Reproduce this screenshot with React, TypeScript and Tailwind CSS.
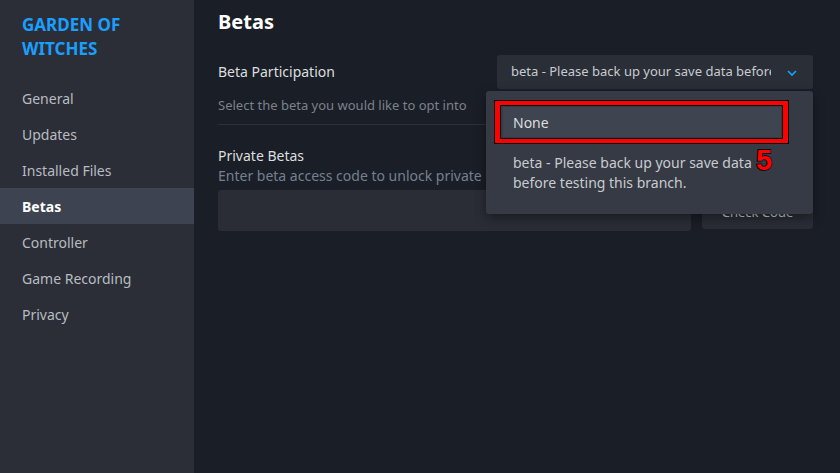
import React from "react";

const font = { fontFamily: '"Noto Sans", "Open Sans", Arial, sans-serif' };

const nav = ["General", "Updates", "Installed Files", "Betas", "Controller", "Game Recording", "Privacy"];

export default function App() {
  return (
    <div className="flex h-[473px] w-[840px] overflow-hidden bg-[#1a1e26]" style={font}>
      <aside className="flex w-[194px] shrink-0 flex-col bg-[#2b2e36]">
        <div className="px-[22px] pt-[13px] text-[17px] font-bold leading-[24px] text-[#1a9fff]">
          GARDEN OF
          <br />
          WITCHES
        </div>
        <nav className="mt-[19px] flex flex-col">
          {nav.map((n) => (
            <div
              key={n}
              className={
                n === "Betas"
                  ? "flex h-[36px] items-center bg-[#3d4350] px-[22px] text-[14px] font-bold text-white"
                  : "flex h-[36px] items-center px-[22px] text-[14px] text-[#b8bcc2]"
              }
            >
              {n}
            </div>
          ))}
        </nav>
      </aside>
      <main className="relative flex flex-1 flex-col px-[24px] pr-[27px]">
        <h1 className="pt-[7px] text-[20px] font-bold leading-[30px] text-white">Betas</h1>
        <div className="mt-[18px] flex items-center justify-between">
          <div className="-mt-[2px] text-[14px] text-[#dcdedf]">Beta Participation</div>
          <div className="flex h-[34px] w-[316px] items-center justify-between rounded-[3px] bg-[#2a2e37] pl-[14px] pr-[15px]">
            <span className="w-[260px] overflow-hidden whitespace-nowrap text-[13px] text-[#c8cbcf]">
              beta - Please back up your save data before testing this branch.
            </span>
            <svg width="12" height="8" viewBox="0 0 12 8" className="mt-[1px]">
              <path d="M2 2 L6 6 L10 2" fill="none" stroke="#1a9fff" strokeWidth="1.6" />
            </svg>
          </div>
        </div>
        <div className="mt-[7px] text-[13px] leading-[18px] text-[#7b828c]">Select the beta you would like to opt into</div>
        <div className="mt-[10px] h-px bg-[#2c313b]" />
        <div className="mt-[21px] text-[14px] leading-[20px] text-[#dcdedf]">Private Betas</div>
        <div className="text-[14px] leading-[20px] text-[#75818f]">
          Enter beta access code to unlock private betas.
        </div>
        <div className="mt-[4px] flex gap-[11px]">
          <div className="h-[41px] flex-1 rounded-[3px] bg-[#2a2d36]" />
          <div className="flex h-[39px] w-[111px] items-center justify-center rounded-[3px] bg-[#2a2d36] pt-[6px] text-[13px] text-[#c8cbcf]">
            Check Code
          </div>
        </div>

        <div className="absolute left-[292px] top-[91px] w-[327px] rounded-[3px] bg-[#363a44] pb-[15px] pl-[17px] pr-[32px] pt-[16px] shadow-[0_4px_12px_rgba(0,0,0,0.4)]">
          <div className="relative">
            <div className="flex h-[30px] items-center bg-[#3e4450] px-[10px] text-[14px] text-[#dcdedf]">None</div>
            <div className="pointer-events-none absolute -bottom-[6px] -left-[8px] -right-[7px] -top-[6px] border-x-[5px] border-y-[4px] border-[#ff0000] shadow-[0_0_0_1px_#000,inset_0_0_0_1px_#000]" />
          </div>
          <div className="relative px-[10px] pb-[6px] pt-[16px] text-[14px] leading-[20px] text-[#c8cbcf]">
            beta - Please back up your save data
            <br />
            before testing this branch.
            <span
              className="absolute left-[253px] top-[6px] text-[29px] font-bold leading-[34px] text-[#ff0000]"
              style={{ WebkitTextStroke: "1.5px #000", paintOrder: "stroke fill", fontFamily: '"Liberation Sans", Arial, sans-serif' }}
            >
              5
            </span>
          </div>
        </div>
      </main>
    </div>
  );
}
